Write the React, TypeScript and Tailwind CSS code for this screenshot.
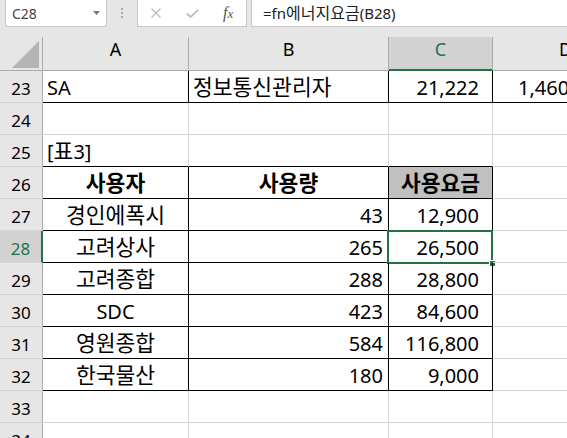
import React from "react";

type B = "k" | "g";
type Al = "l" | "c" | "r" | "rc" | "d";
type Cell = { t?: string; al?: Al; r: B; b: B; bold?: boolean; bg?: boolean; sel?: boolean };

const rCls: Record<B, string> = {
  k: "border-r border-r-black",
  g: "border-r border-r-[#d4d4d4]",
};
const bCls: Record<B, string> = {
  k: "border-b border-b-black",
  g: "border-b border-b-[#d4d4d4]",
};
const alCls: Record<Al, string> = {
  l: "justify-start pl-[4px]",
  c: "justify-center",
  r: "justify-end pr-[5px]",
  rc: "justify-end pr-[13px]",
  d: "justify-start pl-[25px]",
};
const wCls = ["w-[146px]", "w-[200px]", "w-[104px]", "w-[146px]"];

const g: Cell = { r: "g", b: "g" };

function Mixed({ t, big }: { t: string; big: string }) {
  const parts = t.split(/([\uAC00-\uD7A3]+)/).filter((p) => p.length > 0);
  return (
    <>
      {parts.map((p, i) =>
        /[\uAC00-\uD7A3]/.test(p) ? (
          <span key={i} className={big}>
            {p}
          </span>
        ) : (
          <span key={i}>{p}</span>
        )
      )}
    </>
  );
}

const rows: { n: number; cells: Cell[] }[] = [
  {
    n: 23,
    cells: [
      { t: "SA", al: "l", r: "k", b: "k" },
      { t: "정보통신관리자", al: "l", r: "k", b: "k" },
      { t: "21,222", al: "rc", r: "k", b: "k" },
      { t: "1,460", al: "d", r: "k", b: "k" },
    ],
  },
  { n: 24, cells: [g, g, g, g] },
  {
    n: 25,
    cells: [
      { t: "[표3]", al: "l", r: "g", b: "k" },
      { r: "g", b: "k" },
      { r: "g", b: "k" },
      g,
    ],
  },
  {
    n: 26,
    cells: [
      { t: "사용자", al: "c", r: "k", b: "k", bold: true },
      { t: "사용량", al: "c", r: "k", b: "k", bold: true },
      { t: "사용요금", al: "c", r: "k", b: "k", bold: true, bg: true },
      g,
    ],
  },
  ...[
    ["경인에폭시", "43", "12,900"],
    ["고려상사", "265", "26,500"],
    ["고려종합", "288", "28,800"],
    ["SDC", "423", "84,600"],
    ["영원종합", "584", "116,800"],
    ["한국물산", "180", "9,000"],
  ].map((d, i) => ({
    n: 27 + i,
    cells: [
      { t: d[0], al: "c" as Al, r: "k" as B, b: "k" as B },
      { t: d[1], al: "r" as Al, r: "k" as B, b: "k" as B },
      { t: d[2], al: "rc" as Al, r: "k" as B, b: "k" as B, sel: i === 1 },
      g,
    ],
  })),
  { n: 33, cells: [g, g, g, g] },
  { n: 34, cells: [g, g, g, g] },
];

function RowHeader({ n }: { n: number }) {
  const sel = n === 28;
  return (
    <div
      className={
        sel
          ? "w-[43px] h-full shrink-0 bg-[#d2d2d2] border-r-2 border-r-[#217346] border-b border-b-[#d4d4d4] flex justify-center items-center pt-[4px] text-[17px] leading-[28px] text-[#217346]"
          : "w-[43px] h-full shrink-0 bg-[#e6e6e6] border-r border-r-[#ababab] border-b border-b-[#d4d4d4] flex justify-center items-center pt-[4px] text-[17px] leading-[28px] text-black"
      }
    >
      {n}
    </div>
  );
}

function DataCell({ c, i }: { c: Cell; i: number }) {
  const cls = [
    "relative flex items-center h-full pt-[2px] leading-[28px] text-[20px] whitespace-nowrap shrink-0",
    wCls[i],
    rCls[c.r],
    bCls[c.b],
    c.al ? alCls[c.al] : "",
    c.bold ? "font-bold" : "",
    c.bg ? "bg-[#c0c0c0]" : "",
  ].join(" ");
  return (
    <div className={cls}>
      {c.t ? (
        <span>
          <Mixed t={c.t} big="text-[21.5px]" />
        </span>
      ) : null}
      {c.sel ? (
        <>
          <div className="absolute left-[-2px] top-[-1px] w-[106px] h-[34px] border-2 border-[#217346] pointer-events-none" />
          <div className="absolute left-[100px] top-[29px] w-[7px] h-[7px] bg-[#217346] border border-white" />
        </>
      ) : null}
    </div>
  );
}

export default function App() {
  return (
    <div className="w-[567px] h-[438px] overflow-hidden bg-white font-['Noto_Sans','Noto_Sans_CJK_KR',sans-serif] text-black">
      {/* formula bar */}
      <div className="h-[37px] bg-[#e6e6e6] flex items-start">
        <div className="ml-[5px] w-[102px] h-[27px] shrink-0 bg-white border border-t-0 border-[#c6c6c6] flex items-center justify-between pl-[6px] pr-[6px] text-[14px] text-[#444]">
          <span>C28</span>
          <svg width="7" height="4" viewBox="0 0 7 4">
            <polygon points="0,0 7,0 3.5,4" fill="#7a7a7a" />
          </svg>
        </div>
        <div className="w-[30px] h-[26px] shrink-0 flex flex-col items-center justify-center gap-[2px]">
          <div className="w-[2px] h-[2px] bg-[#a6a6a6]" />
          <div className="w-[2px] h-[2px] bg-[#a6a6a6]" />
          <div className="w-[2px] h-[2px] bg-[#a6a6a6]" />
        </div>
        <div className="w-[110px] h-[27px] shrink-0 bg-white border border-t-0 border-[#c6c6c6] flex items-center">
          <svg className="ml-[13px]" width="10" height="10" viewBox="0 0 10 10">
            <path d="M0.5 0.5 L9.5 9.5 M9.5 0.5 L0.5 9.5" stroke="#bdbdbd" strokeWidth="1.3" fill="none" />
          </svg>
          <svg className="ml-[25px]" width="13" height="9" viewBox="0 0 13 9">
            <path d="M0.8 4.5 L4.6 8 L12.3 0.8" stroke="#bdbdbd" strokeWidth="1.8" fill="none" />
          </svg>
          <span className="ml-[24px] italic font-['Liberation_Serif',serif] text-[16px] leading-none text-[#555]">
            f<span className="text-[13px]">x</span>
          </span>
        </div>
        <div className="ml-[4px] flex-1 h-[27px] bg-white border border-t-0 border-r-0 border-[#c6c6c6] flex items-center pl-[11px] text-[15px] text-[#222] whitespace-nowrap">
          <span>
            <Mixed t="=fn에너지요금(B28)" big="text-[16px]" />
          </span>
        </div>
      </div>

      {/* column headers */}
      <div className="flex h-[34px] w-max">
        <div className="w-[43px] h-full shrink-0 bg-[#e6e6e6] border-r border-b border-[#ababab] flex justify-end items-end pr-[3px] pb-[2px]">
          <svg width="27" height="27" viewBox="0 0 27 27">
            <polygon points="27,0 27,27 0,27" fill="#b4b4b4" />
          </svg>
        </div>
        <div className="w-[146px] h-full shrink-0 bg-[#e6e6e6] border-r border-b border-[#ababab] flex items-center justify-center pb-[8px] text-[18px]">
          A
        </div>
        <div className="w-[200px] h-full shrink-0 bg-[#e6e6e6] border-r border-b border-[#ababab] flex items-center justify-center pb-[8px] text-[18px]">
          B
        </div>
        <div className="w-[104px] h-full shrink-0 bg-[#d2d2d2] border-r border-r-[#ababab] border-b-2 border-b-[#217346] flex items-center justify-center pb-[7px] text-[18px] text-[#217346]">
          C
        </div>
        <div className="w-[146px] h-full shrink-0 bg-[#e6e6e6] border-r border-b border-[#ababab] flex items-center justify-center pb-[8px] text-[18px]">
          D
        </div>
      </div>

      {/* body */}
      {rows.map((row) => (
        <div key={row.n} className="flex h-[32px] w-max">
          <RowHeader n={row.n} />
          {row.cells.map((c, i) => (
            <DataCell key={i} c={c} i={i} />
          ))}
        </div>
      ))}
    </div>
  );
}
